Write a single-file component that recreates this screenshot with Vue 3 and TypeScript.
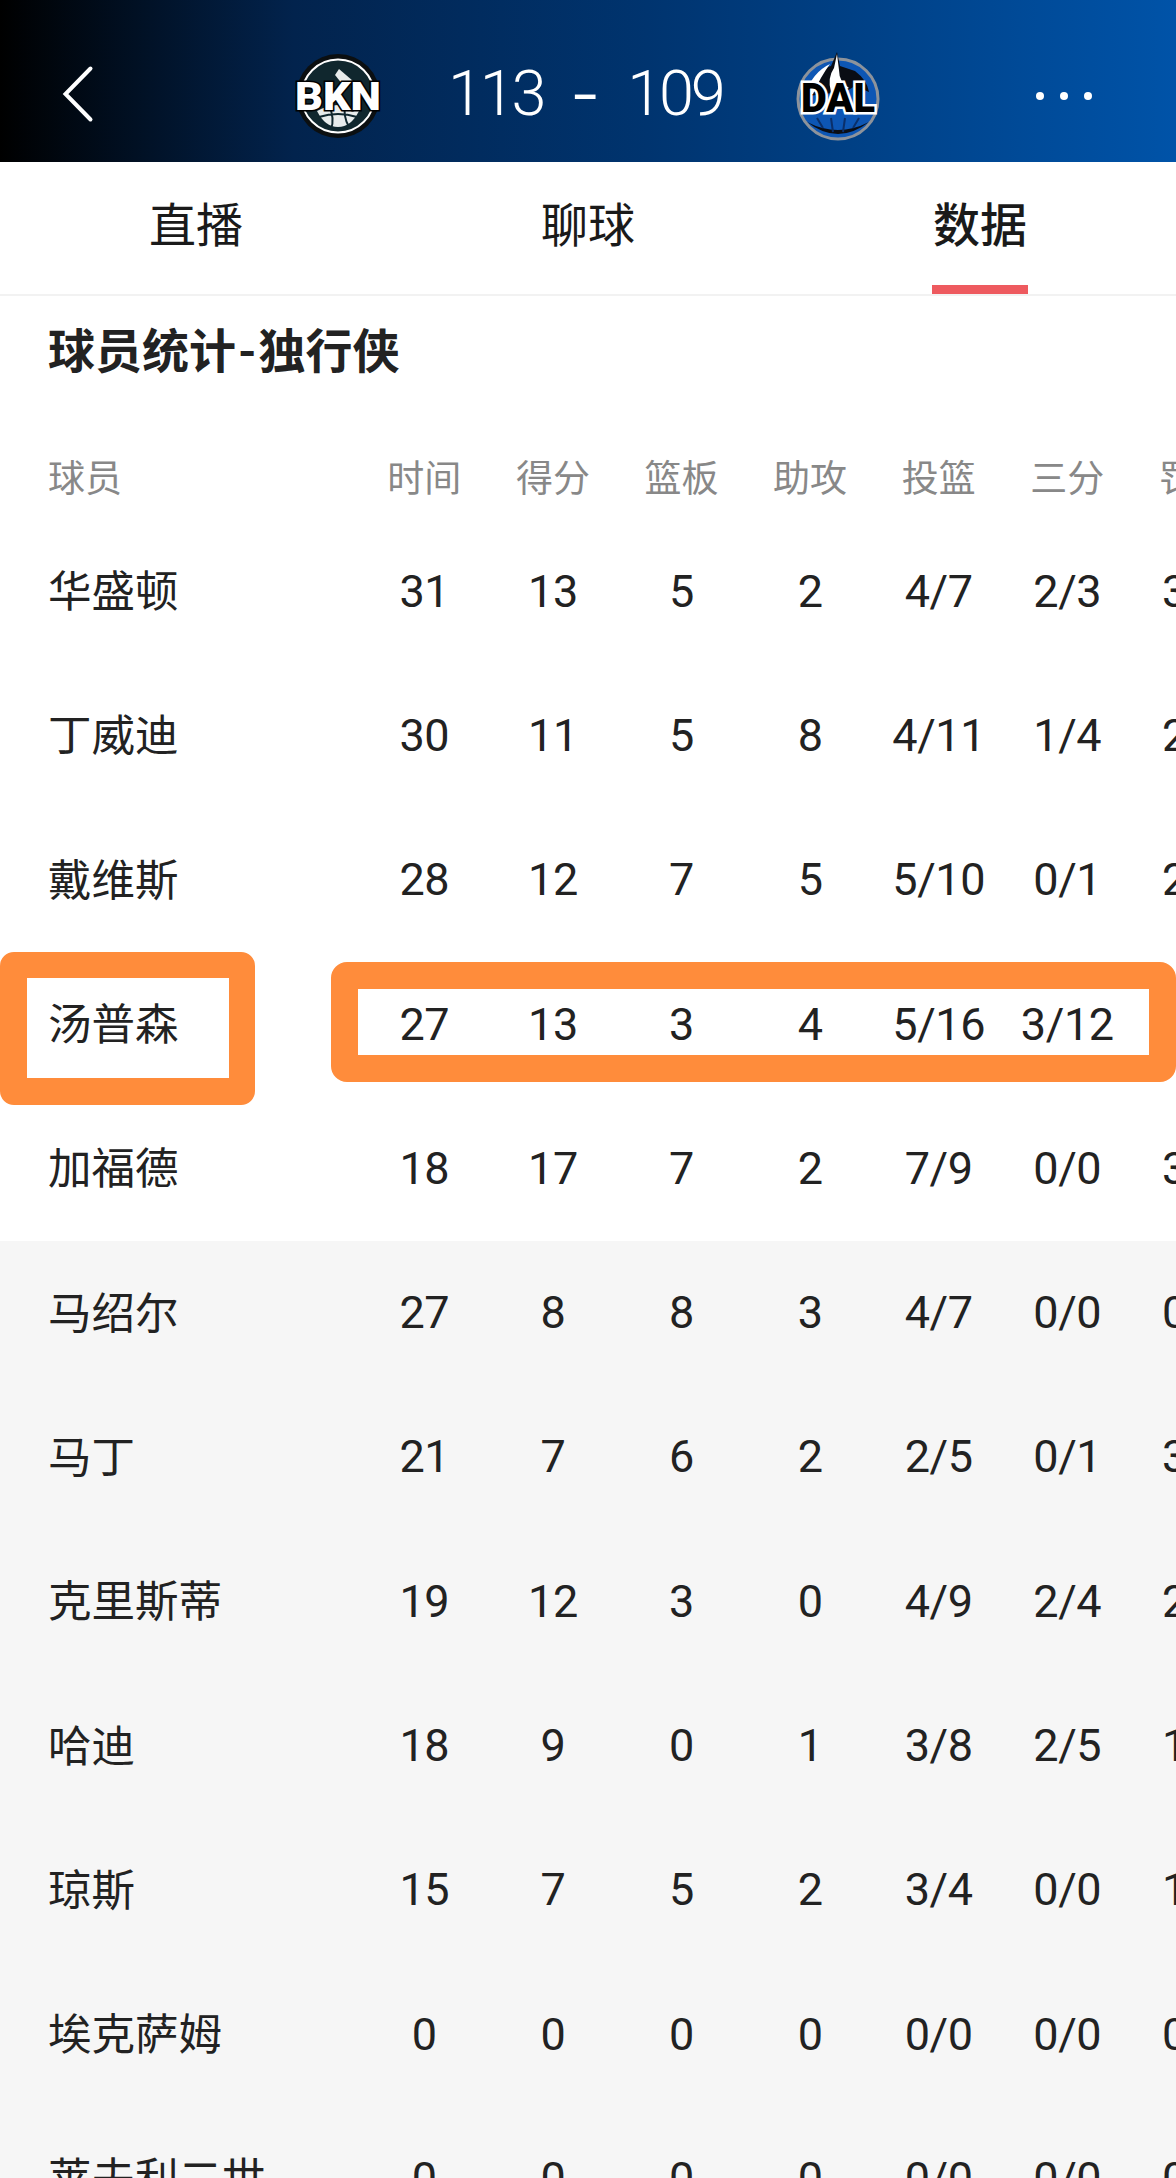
<script setup lang="ts">
interface PlayerRow { name: string; stats: string[]; bench: boolean }

const columns: string[] = ['时间', '得分', '篮板', '助攻', '投篮', '三分', '罚球']

const raw: Array<[string, string]> = [
  ['华盛顿', '31 13 5 2 4/7 2/3 3/4'],
  ['丁威迪', '30 11 5 8 4/11 1/4 2/2'],
  ['戴维斯', '28 12 7 5 5/10 0/1 2/2'],
  ['汤普森', '27 13 3 4 5/16 3/12 0/0'],
  ['加福德', '18 17 7 2 7/9 0/0 3/4'],
  ['马绍尔', '27 8 8 3 4/7 0/0 0/0'],
  ['马丁', '21 7 6 2 2/5 0/1 3/4'],
  ['克里斯蒂', '19 12 3 0 4/9 2/4 2/2'],
  ['哈迪', '18 9 0 1 3/8 2/5 1/2'],
  ['琼斯', '15 7 5 2 3/4 0/0 1/2'],
  ['埃克萨姆', '0 0 0 0 0/0 0/0 0/0'],
  ['莱夫利二世', '0 0 0 0 0/0 0/0 0/0'],
]

const rows: PlayerRow[] = raw.map(([name, s], i) => ({ name, stats: s.split(' '), bench: i >= 5 }))
const tabs = ['直播', '聊球', '数据']
</script>

<template>
  <div class="page">
    <header class="top">
      <svg class="back" width="32" height="58" viewBox="0 0 32 58" fill="none">
        <path d="M28.500 3.500 L3.500 29 L28.500 54.500" stroke="#fff" stroke-width="4" stroke-linecap="round" />
      </svg>
      <div class="match">
        <svg class="logo" width="90" height="90" viewBox="0 0 90 90">
          <circle cx="45" cy="45" r="42" fill="#0b0f11" />
          <circle cx="45" cy="45" r="36.500" fill="#10272e" stroke="#fff" stroke-width="2" />
          <path d="M24 60 Q45 48 66 60 Q58 76 45 76 Q32 76 24 60Z" fill="#e8ecec" />
          <path d="M46 18 L60 30 L50 34 L42 24Z" fill="#e8ecec" />
          <path d="M36 54 Q42 68 38 78 M52 52 Q50 66 56 76 M26 66 Q45 60 64 66" fill="none" stroke="#10272e" stroke-width="2" />
          <text x="45" y="59" class="abbr" text-anchor="middle" font-size="39" textLength="86" lengthAdjust="spacingAndGlyphs">BKN</text>
        </svg>
        <div class="score"><span>113</span><span class="dash">-</span><span>109</span></div>
        <svg class="logo dal-logo" width="90" height="100" viewBox="0 0 90 100">
          <circle cx="45" cy="55" r="40" fill="#0d56b4" stroke="#8d939b" stroke-width="3" />
          <path d="M16 52 Q22 26 38 22 L44 8 L47 22 L62 27 Q74 36 76 48 L62 42 L52 48 L30 50Z" fill="#0a0d14" />
          <path d="M38 48 Q34 34 41 24 L44 10 L46 26 Q46 38 56 44Z" fill="#fff" />
          <path d="M12 50 Q20 28 37 20 Q28 32 20 50Z" fill="#fff" />
          <path d="M14 78 Q45 102 76 78 Q45 94 14 78Z" fill="#0a0d14" />
          <path d="M24 74 L30 84 M38 74 L40 88 M52 74 L50 88 M66 74 L60 84" fill="none" stroke="#0a2f6a" stroke-width="2" />
          <text x="45" y="68" class="abbr dal" text-anchor="middle" font-size="40" textLength="74" lengthAdjust="spacingAndGlyphs">DAL</text>
        </svg>
      </div>
      <div class="dots"><i></i><i></i><i></i></div>
    </header>

    <nav class="tabs">
      <div v-for="(t, i) in tabs" :key="t" class="tab" :class="{ on: i === 2 }">{{ t }}</div>
    </nav>

    <h1 class="title">球员统计<span class="hy">-</span>独行侠</h1>

    <section class="table">
      <div class="row head">
        <div class="name">球员</div>
        <div v-for="c in columns" :key="c" class="cell">{{ c }}</div>
      </div>
      <div v-for="r in rows" :key="r.name" class="row body" :class="{ bench: r.bench }">
        <div class="name">{{ r.name }}</div>
        <div v-for="(s, i) in r.stats" :key="i" class="cell">{{ s }}</div>
      </div>
      <div class="mark mark-name"></div>
      <div class="mark mark-stats"></div>
    </section>
  </div>
</template>

<style>
html, body { margin: 0; background: #f6f6f6; }
</style>

<style scoped>
.page {
  position: relative;
  width: 1176px;
  height: 2178px;
  overflow: hidden;
  background: #fff;
  font-family: Roboto, "Noto Sans CJK SC", sans-serif;
  color: #222;
}
.top {
  box-sizing: border-box;
  height: 162px;
  display: grid;
  grid-template-columns: 1fr auto 1fr;
  align-items: center;
  padding: 30px 84px 0;
  background: linear-gradient(90deg, #000 0%, #02234d 25%, #00346f 55%, #0053a8 100%);
}
.back { margin-left: -22px; margin-bottom: 5px; }
.match { display: flex; align-items: center; }
.logo { display: block; }
.dal-logo { margin-bottom: 4px; }
.score {
  display: flex;
  align-items: center;
  box-sizing: border-box;
  width: 410px;
  padding-left: 65px;
  margin-bottom: 5px;
  color: #fff;
  font-size: 63px;
  font-weight: 300;
  line-height: 1;
  letter-spacing: -3.200px;
}
.dash {
  width: 84px;
  text-align: center;
  font-size: 88px;
  font-weight: 300;
  letter-spacing: 0;
}
.abbr {
  font-family: Roboto, sans-serif;
  font-weight: 900;
  fill: #fff;
  stroke: #000;
  stroke-width: 3;
  paint-order: stroke;
}
.abbr.dal { fill: #000; stroke: #fff; stroke-width: 5; }
.dots { justify-self: end; display: flex; gap: 16px; }
.dots i { display: block; width: 8px; height: 8px; border-radius: 50%; background: #fff; }

.tabs {
  height: 132px;
  display: flex;
  border-bottom: 2px solid #f2f2f2;
}
.tab {
  flex: 1;
  position: relative;
  display: flex;
  justify-content: center;
  padding-top: 33px;
  font-size: 47px;
  line-height: 62px;
  color: #1a1a1a;
}
.tab.on { font-weight: 500; }
.tab.on::after {
  content: "";
  position: absolute;
  left: 50%;
  bottom: 0;
  width: 96px;
  height: 9px;
  margin-left: -48px;
  background: #ee5a5f;
}
.title {
  margin: 0;
  padding: 27px 48px 0;
  font-size: 47px;
  line-height: 58px;
  font-weight: 700;
  color: #222;
}
.hy { padding: 0 2px; }
.table { position: absolute; top: 0; left: 0; width: 1176px; padding-top: 432px; }
.row {
  display: grid;
  grid-template-columns: 360px repeat(7, 128.6px);
  align-items: center;
  width: 1260px;
}
.row.head { height: 88px; color: #888; font-size: 37px; }
.row.body { height: 144.3px; font-size: 45px; letter-spacing: -0.4px; }
.row.bench { background: #f6f6f6; }
.name { padding-left: 48px; }
.row.body .cell { padding-bottom: 2px; }
.row.body .name { font-size: 43.500px; letter-spacing: 0; padding-bottom: 7px; }
.cell { text-align: center; white-space: nowrap; }
.mark { position: absolute; box-sizing: border-box; border: solid #ff8c3b; }
.mark-name { left: 0; top: 952px; width: 255px; height: 153px; border-width: 26px 26px 27px 27px; border-radius: 14px; }
.mark-stats { left: 331px; top: 962px; width: 845px; height: 120px; border-width: 27px; border-radius: 16px; }
</style>
